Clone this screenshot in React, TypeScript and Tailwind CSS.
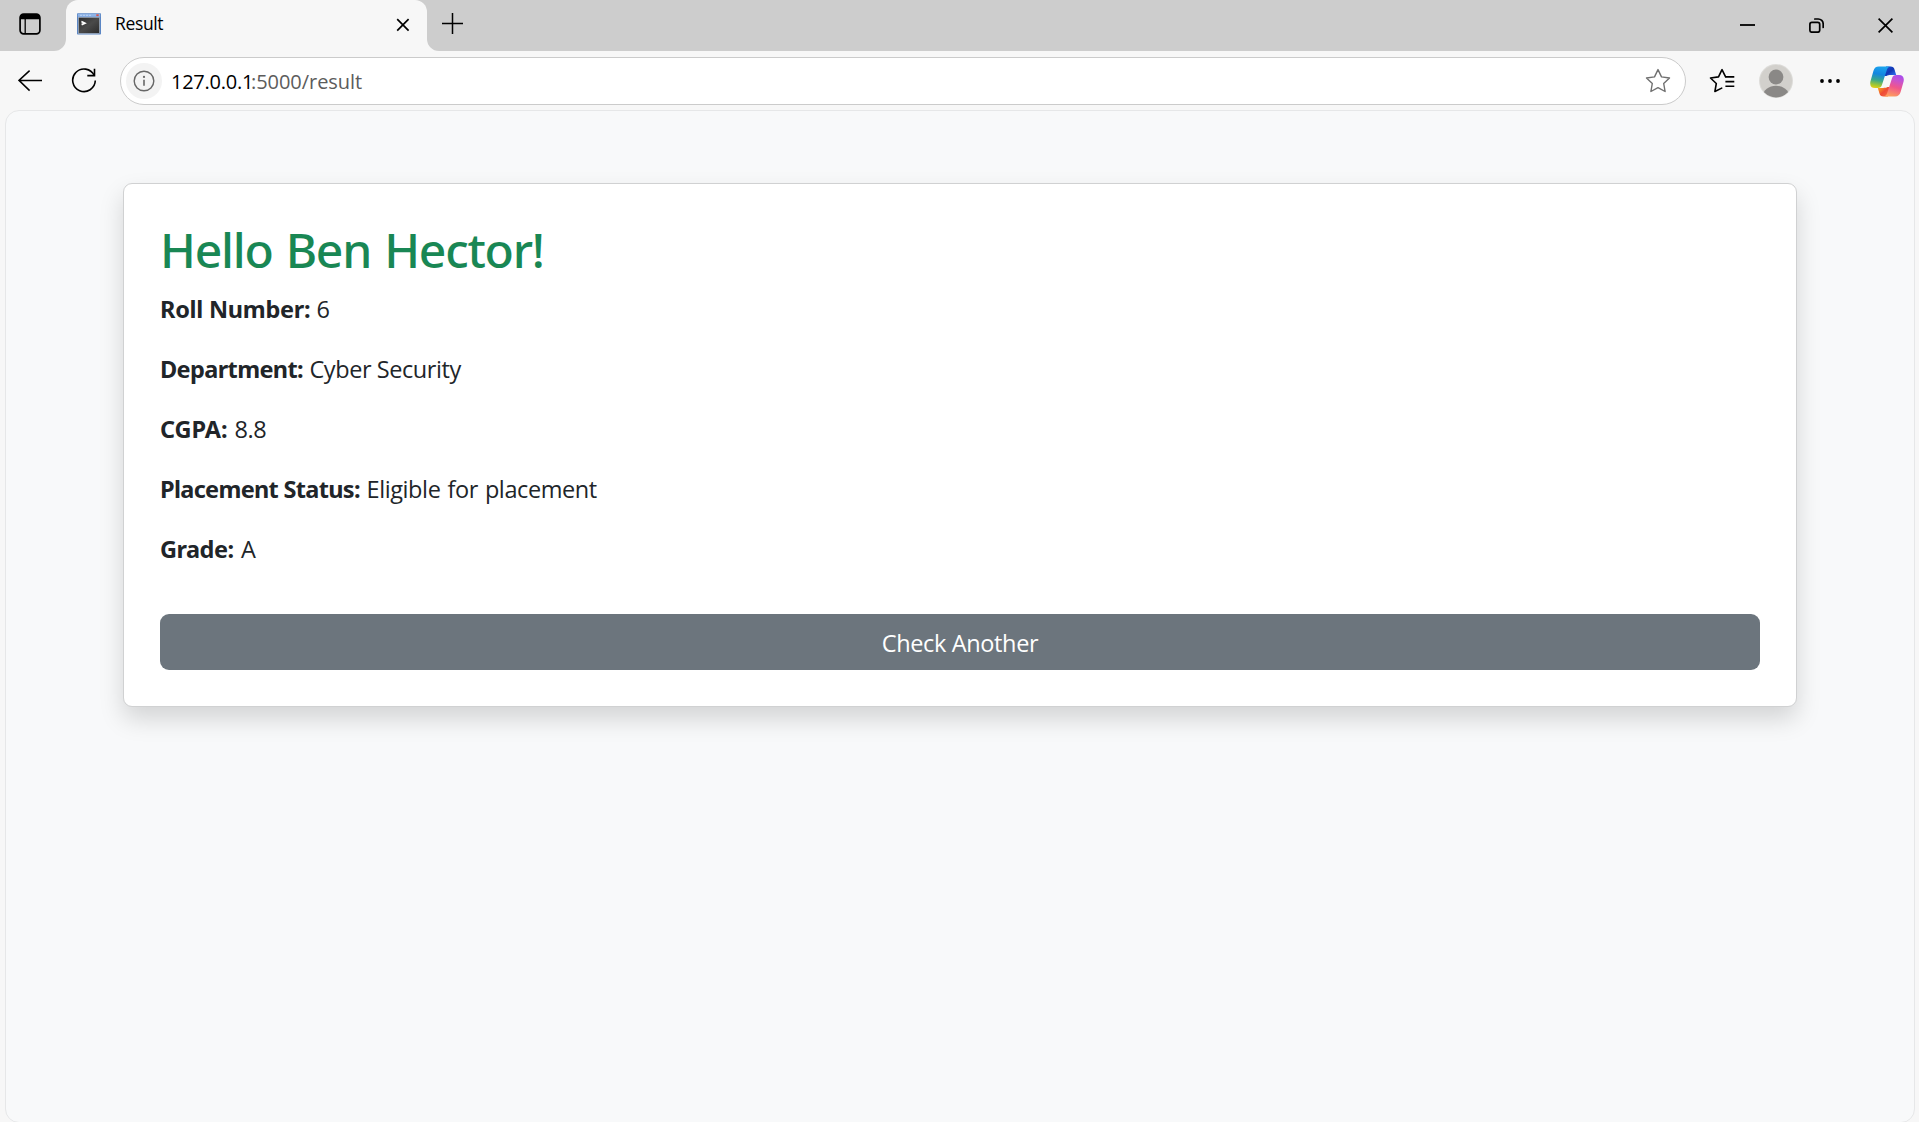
import type { ReactNode } from 'react';

type Row = { label: string; value: string; labelClass: string; valueClass: string };

const rows: Row[] = [
  { label: 'Roll Number:', value: '6', labelClass: 'w-[156.5px] tracking-[-0.26px]', valueClass: '' },
  { label: 'Department:', value: 'Cyber Security', labelClass: 'w-[149.5px] tracking-[-0.62px]', valueClass: 'tracking-[-0.43px]' },
  { label: 'CGPA:', value: '8.8', labelClass: 'w-[74.5px] tracking-[-0.1px]', valueClass: 'tracking-[-0.4px]' },
  { label: 'Placement Status:', value: 'Eligible for placement', labelClass: 'w-[206.5px] tracking-[-0.68px]', valueClass: 'tracking-[-0.4px] [word-spacing:1.3px]' },
  { label: 'Grade:', value: 'A', labelClass: 'w-[81px] tracking-[-0.5px]', valueClass: '' },
];

function Icon({ w, h, className = '', children }: { w: number; h: number; className?: string; children: ReactNode }) {
  return (
    <svg width={w} height={h} viewBox={`0 0 ${w} ${h}`} fill="none" className={`block shrink-0 ${className}`}>
      {children}
    </svg>
  );
}

function TerminalIcon() {
  return (
    <Icon w={24} h={22}>
      <defs>
        <linearGradient id="term" x1="0" y1="0" x2="1" y2="1">
          <stop offset="0" stopColor="#2e2e2e" />
          <stop offset="0.5" stopColor="#4a4a4a" />
          <stop offset="1" stopColor="#2b2b2b" />
        </linearGradient>
      </defs>
      <rect x="0" y="0.3" width="24" height="21.2" rx="0.8" fill="#5b86c4" />
      <rect x="0.8" y="0.8" width="22.4" height="3" fill="#8fb4e6" />
      <path d="M3 2.3h12" stroke="#bcd3f2" strokeWidth="1" strokeDasharray="2 1" />
      <rect x="19.3" y="1.3" width="2.4" height="1.8" fill="#d9534a" />
      <rect x="1.5" y="4.3" width="21" height="16" fill="url(#term)" stroke="#b5bcc6" strokeWidth="0.6" />
      <path d="M4.4 8.6l3.4 1.6-3.2 1.4" stroke="#fff" strokeWidth="1.7" />
    </Icon>
  );
}

function CopilotIcon() {
  return (
    <Icon w={34} h={31}>
      <defs>
        <linearGradient id="cpA" x1="10" y1="0" x2="6" y2="23" gradientUnits="userSpaceOnUse">
          <stop offset="0" stopColor="#1ba5ee" />
          <stop offset="0.35" stopColor="#1486e0" />
          <stop offset="0.62" stopColor="#3aa88a" />
          <stop offset="0.85" stopColor="#a9c92c" />
          <stop offset="1" stopColor="#f7cf12" />
        </linearGradient>
        <linearGradient id="cpB" x1="27" y1="8" x2="20" y2="31" gradientUnits="userSpaceOnUse">
          <stop offset="0" stopColor="#a54cf0" />
          <stop offset="0.25" stopColor="#c653d0" />
          <stop offset="0.55" stopColor="#f0568c" />
          <stop offset="1" stopColor="#ffa45a" />
        </linearGradient>
        <linearGradient id="cpC" x1="17" y1="0" x2="24" y2="9" gradientUnits="userSpaceOnUse">
          <stop offset="0" stopColor="#1a4bd0" />
          <stop offset="0.55" stopColor="#1238b4" />
          <stop offset="1" stopColor="#2a68e8" />
        </linearGradient>
        <linearGradient id="cpD" x1="9" y1="22" x2="17" y2="31" gradientUnits="userSpaceOnUse">
          <stop offset="0" stopColor="#f9a01e" />
          <stop offset="0.5" stopColor="#ee4a35" />
          <stop offset="1" stopColor="#f56a4a" />
        </linearGradient>
      </defs>
      <path d="M16 0.6h4.6c2.2 0 3.4 1.1 4 3.2l1.6 5.2H21c-2 0-3.4 0.2-4.4 0.9L14 10z" fill="url(#cpC)" />
      <path d="M18 30.4h-4.6c-2.2 0-3.4-1.1-4-3.2L7.8 22H13c2 0 3.4-0.2 4.4-0.9l2.6-0.1z" fill="url(#cpD)" />
      <path d="M8.8 0.6H21c-2.3 0-3.5 1.3-4.1 3.2L12 18.8c-0.7 2.2-1.9 3.3-4.2 3.3H5C1.2 22.1-0.4 19.4 0.4 15.6L3.4 5C4.3 2 6 0.6 8.8 0.6z" fill="url(#cpA)" />
      <path d="M25.2 30.4H13c2.3 0 3.5-1.3 4.1-3.2L22 12.2c0.7-2.2 1.9-3.3 4.2-3.3H29c3.8 0 5.4 2.7 4.6 6.5L30.6 26c-0.9 3-2.6 4.4-5.4 4.4z" fill="url(#cpB)" />
    </Icon>
  );
}

function TabStrip() {
  return (
    <header className="flex h-[51px] shrink-0 items-start bg-[#cdcdcd] text-black">
      <div className="flex h-[48px] w-[66px] items-center pl-[19px]">
        <Icon w={22} h={22}>
          <rect x="1.1" y="1.1" width="19.8" height="19.8" rx="3.6" stroke="currentColor" strokeWidth="1.7" />
          <path d="M1 6.2V4.6A3.6 3.6 0 0 1 4.6 1h12.8A3.6 3.6 0 0 1 21 4.6v1.6z" fill="currentColor" />
          <path d="M6.2 6v15" stroke="currentColor" strokeWidth="1.3" />
        </Icon>
      </div>
      <div className="relative flex h-[51px] w-[361px] rounded-t-[12px] bg-[#f7f7f7] pl-[11px]">
        <Icon w={12} h={12} className="absolute bottom-0 -left-[12px]">
          <path d="M12 0v12H0A12 12 0 0 0 12 0z" fill="#f7f7f7" />
        </Icon>
        <Icon w={12} h={12} className="absolute -right-[12px] bottom-0">
          <path d="M0 0v12h12A12 12 0 0 1 0 0z" fill="#f7f7f7" />
        </Icon>
        <div className="pt-[13px]">
          <TerminalIcon />
        </div>
        <span className="ml-[14px] pt-[11px] text-[17.5px] leading-[24px] tracking-[-0.35px]">Result</span>
        <div className="mr-[17px] ml-auto pt-[18px]">
          <Icon w={14} h={14}>
            <path d="M1.2 1.2l11.4 11.4M12.6 1.2L1.2 12.6" stroke="currentColor" strokeWidth="1.7" />
          </Icon>
        </div>
      </div>
      <div className="pt-[13px] pl-[15px]">
        <Icon w={21} h={21}>
          <path d="M10.5 0v21M0 10.5h21" stroke="currentColor" strokeWidth="1.5" />
        </Icon>
      </div>
      <div className="ml-auto flex gap-[54px] pt-[18px] pr-[26px]">
        <Icon w={15} h={15}>
          <path d="M0 7h15" stroke="currentColor" strokeWidth="1.8" />
        </Icon>
        <Icon w={15} h={15}>
          <rect x="0.9" y="4.4" width="9.8" height="9.8" rx="2" stroke="currentColor" strokeWidth="1.7" />
          <path d="M5.8 1h3.4a5 5 0 0 1 5 5v3.4" stroke="currentColor" strokeWidth="1.7" strokeLinecap="round" />
        </Icon>
        <Icon w={15} h={15}>
          <path d="M0.6 0.6l13.8 13.8M14.4 0.6L0.6 14.4" stroke="currentColor" strokeWidth="1.7" />
        </Icon>
      </div>
    </header>
  );
}

function Toolbar() {
  return (
    <div className="flex h-[59px] shrink-0 items-center pt-[1px] text-black">
      <Icon w={24} h={22} className="ml-[18px]">
        <path d="M24 10.4H1M11.6 0.6L1 10.4l10.6 10.2" stroke="currentColor" strokeWidth="1.5" />
      </Icon>
      <Icon w={26} h={26} className="ml-[29px]">
        <path d="M23.2 7.4A11.3 11.3 0 1 0 24.3 12.6" stroke="currentColor" strokeWidth="1.6" />
        <path d="M23.5 0.8v6.8h-7.2" stroke="currentColor" strokeWidth="1.6" />
      </Icon>
      <div className="ml-[23px] flex h-[48px] w-[1566px] items-center rounded-full border border-[#cbcbcb] bg-white pl-[5px]">
        <div className="flex size-[36px] items-center justify-center rounded-full bg-[#f3f3f3] text-[#666]">
          <Icon w={22} h={22}>
            <circle cx="11" cy="11" r="9.8" stroke="currentColor" strokeWidth="1.4" />
            <path d="M11 9.8v6" stroke="currentColor" strokeWidth="1.6" />
            <circle cx="11" cy="6.9" r="1.1" fill="currentColor" />
          </Icon>
        </div>
        <div className="ml-[9px] flex pt-[2px] text-[20px] leading-[28px]">
          <span className="w-[80px] tracking-[-0.25px]">127.0.0.1</span>
          <span className="tracking-[-0.05px] text-[#5c5c5c]">:5000/result</span>
        </div>
        <Icon w={26} h={26} className="mr-[14px] ml-auto text-[#707070]">
          <path
            d="M13 1.6l3.5 7.3 8 1.1-5.8 5.5 1.4 8L13 19.7l-7.1 3.8 1.4-8L1.5 10l8-1.1z"
            stroke="currentColor"
            strokeWidth="1.4"
            strokeLinejoin="round"
          />
        </Icon>
      </div>
      <Icon w={26} h={26} className="ml-[22.5px]">
        <path
          d="M16.6 8.9L13 1.6 9.5 8.9l-8 1.1 5.8 5.5-1.4 8 6.8-3.4"
          stroke="currentColor"
          strokeWidth="1.6"
          strokeLinejoin="round"
          strokeLinecap="round"
        />
        <path d="M16.4 8.9h8.9M16.4 13.6h8.9M16.4 18.3h8.9" stroke="currentColor" strokeWidth="1.6" />
      </Icon>
      <Icon w={34} h={34} className="ml-[24.5px]">
        <defs>
          <clipPath id="avatar">
            <circle cx="17" cy="17" r="16.4" />
          </clipPath>
        </defs>
        <circle cx="17" cy="17" r="17" fill="#dddcd9" />
        <circle cx="17" cy="17" r="16" fill="#d2d0cc" />
        <g clipPath="url(#avatar)" fill="#8a8886">
          <circle cx="17" cy="13" r="7.4" />
          <ellipse cx="17" cy="32" rx="13" ry="10.3" />
        </g>
      </Icon>
      <Icon w={20} h={4} className="ml-[27px]">
        <circle cx="2" cy="2" r="1.9" fill="currentColor" />
        <circle cx="10" cy="2" r="1.9" fill="currentColor" />
        <circle cx="18" cy="2" r="1.9" fill="currentColor" />
      </Icon>
      <div className="ml-[30px]">
        <CopilotIcon />
      </div>
    </div>
  );
}

export default function App() {
  return (
    <div className="flex h-screen w-full flex-col overflow-hidden bg-[#f7f7f7] font-['Open_Sans','Noto_Sans',sans-serif]">
      <TabStrip />
      <Toolbar />
      <main className="mr-[4px] -mb-px ml-[5px] flex-1 rounded-[14px] border border-[#e6e7e8] bg-[#f8f9fa] px-[117px] pt-[72px] text-[#212529]">
        <section className="rounded-[9px] border border-[#d0d1d2] bg-white px-[36px] pt-[37px] pb-[36px] shadow-[0_12px_24px_rgba(0,0,0,0.15)]">
          <h2 className="mb-[12px] font-['Noto_Sans',sans-serif] text-[48px] leading-[57.6px] font-medium tracking-[-1.25px] text-[#198754] [word-spacing:2px]">
            Hello Ben Hector!
          </h2>
          {rows.map((row) => (
            <p key={row.label} className="mb-[24px] flex text-[23.5px] leading-[36px] whitespace-nowrap">
              <strong className={`font-['Noto_Sans',sans-serif] font-bold ${row.labelClass}`}>{row.label}</strong>
              <span className={row.valueClass}>{row.value}</span>
            </p>
          ))}
          <button className="mt-[47.4px] block h-[56px] w-full rounded-[9px] bg-[#6c757d] pt-[2px] text-[23.5px] leading-[36px] tracking-[-0.35px] text-white">
            Check Another
          </button>
        </section>
      </main>
    </div>
  );
}
